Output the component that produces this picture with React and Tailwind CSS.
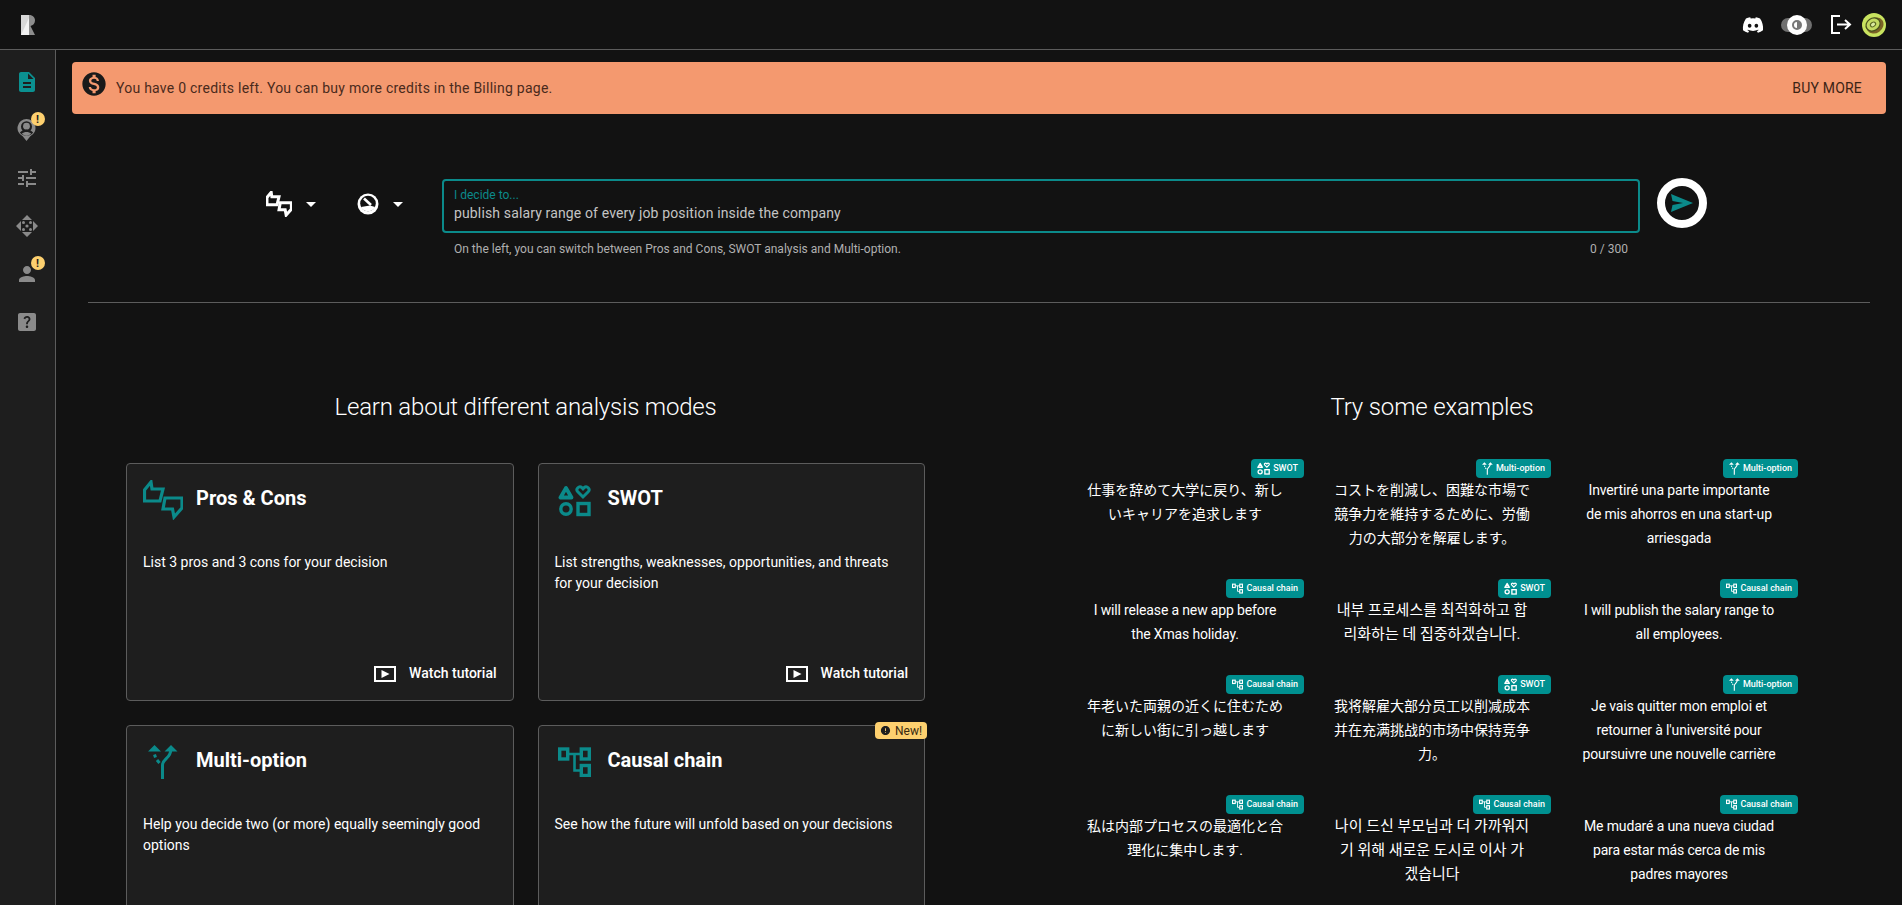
import { FaDiscord } from 'react-icons/fa'
import { MdDescription, MdTune, MdPerson, MdHelpCenter, MdMonetizationOn, MdArrowDropDown, MdError } from 'react-icons/md'

function ProsConsIcon({ className }) {
  return (
    <svg viewBox="0 0 40 40" fill="none" stroke="currentColor" strokeWidth="3.200" strokeLinejoin="miter" className={className}>
      <path d="M1.500 21V10L8 2l1 7h11l-3 12z" />
      <path d="M22 18h17v10l-8 9-1.500-8H20z" />
    </svg>
  )
}

function SwotIcon({ className }) {
  return (
    <svg viewBox="0 0 33 33" fill="none" stroke="currentColor" strokeWidth="3.400" className={className}>
      <path d="M8 4L2.500 13.500h11z" strokeLinejoin="round" strokeWidth="3.800" />
      <path d="M25 13l-5.200-5.200a2.900 2.900 0 0 1 4.100-4.100l1.100 1.100 1.100-1.100a2.900 2.900 0 0 1 4.100 4.100z" strokeWidth="3" />
      <circle cx="8" cy="25" r="5.200" />
      <rect x="20" y="19.500" width="11" height="11" />
    </svg>
  )
}

function MultiIcon({ className }) {
  return (
    <svg viewBox="0 0 30 34" fill="none" className={className}>
      <path d="M14.500 34V20C14.500 14 22.800 13 22.800 5" stroke="currentColor" strokeWidth="3" />
      <path d="M6.500 0L13 6.500H0zM23 0l6.500 6.500h-13z" fill="currentColor" />
      <path d="M6.500 9.500l1 3M9 15l2.500 3" stroke="currentColor" strokeWidth="3" />
    </svg>
  )
}

function CausalIcon({ className }) {
  return (
    <svg viewBox="0 0 33 30" fill="none" stroke="currentColor" strokeWidth="3.400" className={className}>
      <rect x="1.700" y="2" width="8" height="10" />
      <rect x="23.300" y="2" width="8" height="10" />
      <rect x="23.300" y="18.500" width="8" height="10" />
      <path d="M9.500 7h14M16.500 7v16.500h7" strokeWidth="2.600" />
    </svg>
  )
}

function MoveIcon({ className }) {
  return (
    <svg viewBox="0 0 22 22" fill="currentColor" className={className}>
      <path d="M11 0l5 5H6zM11 22l-5-5h10zM0 11l5-5v10zM22 11l-5 5V6z" />
      <circle cx="11" cy="11" r="1.600" />
      <circle cx="7.500" cy="7.500" r="1.500" />
      <circle cx="14.500" cy="7.500" r="1.500" />
      <circle cx="7.500" cy="14.500" r="1.500" />
      <circle cx="14.500" cy="14.500" r="1.500" />
    </svg>
  )
}

function UserPinIcon({ className }) {
  return (
    <svg viewBox="0 0 20 23" className={className}>
      <path d="M10 0a9.500 9.500 0 0 1 4 18.100L10 23l-4-4.900A9.500 9.500 0 0 1 10 0z" fill="currentColor" />
      <circle cx="10" cy="8" r="5.800" fill="#1e1e1e" />
      <circle cx="10" cy="7.500" r="3.600" fill="currentColor" />
      <path d="M3 14c2-2 4-2.800 7-2.800s5 .8 7 2.800a9 9 0 0 1-14 0z" fill="#1e1e1e" />
      <path d="M5 15.500c1.500-1.500 3-2 5-2s3.500.5 5 2a8 8 0 0 1-10 0z" fill="currentColor" />
    </svg>
  )
}

function Logo() {
  return (
    <svg viewBox="0 0 14 20" className="w-[14px] h-[20px]">
      <path d="M0 0h8v20H0z" fill="#d8d8d8" />
      <path d="M0 20L8 3v17z" fill="#f2f2f2" />
      <path d="M8 0c4 0 6 2.500 6 5.500S12 10.500 9.500 11L14 20H8z" fill="#8d8d8d" />
    </svg>
  )
}

function Kiwi() {
  return (
    <svg viewBox="0 0 24 24" className="w-6 h-6">
      <circle cx="12" cy="12" r="12" fill="#c8e35f" />
      <ellipse cx="12.500" cy="13" rx="9" ry="7.500" transform="rotate(-35 12 12)" fill="#7a6226" />
      <ellipse cx="11.500" cy="11" rx="8" ry="6.800" transform="rotate(-35 12 12)" fill="#46501c" />
      <ellipse cx="11.500" cy="11" rx="6.800" ry="5.600" transform="rotate(-35 12 12)" fill="#c4da62" />
      <ellipse cx="11.500" cy="11" rx="3.400" ry="2.600" transform="rotate(-35 12 12)" fill="#5c6a24" />
      <ellipse cx="11.500" cy="11" rx="2.200" ry="1.600" transform="rotate(-35 12 12)" fill="#dcebA0" />
    </svg>
  )
}

function WarnDot() {
  return (
    <span className="absolute -top-[6px] -right-[6px] w-[14px] h-[14px] rounded-full bg-[#fdd06f] flex items-center justify-center text-[#1e1e1e] text-[11px] font-bold leading-none">!</span>
  )
}

const sideItems = [
  { icon: <MdDescription className="w-[24px] h-[24px]" />, color: 'text-[#0b9090]', top: 'mt-[20px]' },
  { icon: <UserPinIcon className="w-[19px] h-[22px]" />, warn: true, top: 'mt-[24px]' },
  { icon: <MdTune className="w-[24px] h-[24px]" />, top: 'mt-[24px]' },
  { icon: <MoveIcon className="w-[22px] h-[22px]" />, top: 'mt-[24px]' },
  { icon: <MdPerson className="w-[24px] h-[24px]" />, warn: true, top: 'mt-[24px]' },
  { icon: <MdHelpCenter className="w-[24px] h-[24px]" />, top: 'mt-[24px]' },
]

const modes = [
  {
    title: 'Pros & Cons',
    desc: 'List 3 pros and 3 cons for your decision',
    icon: <ProsConsIcon className="w-[40px] h-[40px]" />,
    iconBox: 'w-[53px] pl-0',
  },
  {
    title: 'SWOT',
    desc: 'List strengths, weaknesses, opportunities, and threats for your decision',
    icon: <SwotIcon className="w-[33px] h-[33px]" />,
    iconBox: 'w-[53px] pl-[3px]',
  },
  {
    title: 'Multi-option',
    desc: 'Help you decide two (or more) equally seemingly good options',
    icon: <MultiIcon className="w-[30px] h-[34px]" />,
    iconBox: 'w-[53px] pl-[5px]',
  },
  {
    title: 'Causal chain',
    desc: 'See how the future will unfold based on your decisions',
    icon: <CausalIcon className="w-[33px] h-[30px]" />,
    iconBox: 'w-[53px] pl-[3px]',
    isNew: true,
  },
]

const chipIcons = {
  SWOT: <SwotIcon className="w-[13px] h-[13px]" />,
  'Multi-option': <MultiIcon className="w-[11px] h-[13px]" />,
  'Causal chain': <CausalIcon className="w-[11px] h-[13px]" />,
}

const LATIN = 'text-[14px] tracking-[-0.15px]'
const JA = "font-['Roboto','Noto_Sans_CJK_JP',sans-serif] text-[14px]"
const KO = "font-['Roboto','Noto_Sans_CJK_KR',sans-serif] text-[15px]"
const ZH = "font-['Roboto','Noto_Sans_CJK_SC',sans-serif] text-[14px]"

const examples = [
  { chip: 'SWOT', font: JA, text: '仕事を辞めて大学に戻り、新しいキャリアを追求します' },
  { chip: 'Multi-option', font: JA, text: 'コストを削減し、困難な市場で競争力を維持するために、労働力の大部分を解雇します。' },
  { chip: 'Multi-option', font: LATIN, text: 'Invertiré una parte importante de mis ahorros en una start-up arriesgada' },
  { chip: 'Causal chain', font: LATIN, text: 'I will release a new app before the Xmas holiday.' },
  { chip: 'SWOT', font: KO, text: '내부 프로세스를 최적화하고 합리화하는 데 집중하겠습니다.' },
  { chip: 'Causal chain', font: LATIN, text: 'I will publish the salary range to all employees.' },
  { chip: 'Causal chain', font: JA, text: '年老いた両親の近くに住むために新しい街に引っ越します' },
  { chip: 'SWOT', font: ZH, text: '我将解雇大部分员工以削减成本并在充满挑战的市场中保持竞争力。' },
  { chip: 'Multi-option', font: LATIN, text: "Je vais quitter mon emploi et retourner à l'université pour poursuivre une nouvelle carrière" },
  { chip: 'Causal chain', font: JA, text: '私は内部プロセスの最適化と合理化に集中します.' },
  { chip: 'Causal chain', font: KO, text: '나이 드신 부모님과 더 가까워지기 위해 새로운 도시로 이사 가겠습니다' },
  { chip: 'Causal chain', font: LATIN, text: 'Me mudaré a una nueva ciudad para estar más cerca de mis padres mayores' },
]

function ModeCard({ mode }) {
  return (
    <div className="relative h-[238px] bg-[#1e1e1e] border border-[#5c5c5c] rounded p-4 flex flex-col">
      {mode.isNew && (
        <span className="absolute -top-[4px] -right-[3px] h-[17px] px-[5px] rounded bg-[#fdd06f] text-[#3a2a10] text-[12px] flex items-center gap-[4px]">
          <MdError className="w-[11px] h-[11px] text-[#1e1e1e]" />
          New!
        </span>
      )}
      <div className="flex items-center h-[40px]">
        <div className={`${mode.iconBox} text-[#0b8a8a] shrink-0`}>{mode.icon}</div>
        <h3 className="text-[20px] font-bold text-white -mt-[5px]">{mode.title}</h3>
      </div>
      <p className="mt-[32px] text-[14px] leading-[21px] text-white">{mode.desc}</p>
      <div className="mt-auto flex items-center justify-end gap-[13px]">
        <svg viewBox="0 0 22 16" className="w-[22px] h-[16px] text-white" fill="none">
          <rect x="1" y="1" width="20" height="14" stroke="currentColor" strokeWidth="2" />
          <path d="M7.500 4l8 4-8 4z" fill="currentColor" />
        </svg>
        <span className="text-[14px] leading-[21px] font-medium text-white">Watch tutorial</span>
      </div>
    </div>
  )
}

function Example({ item }) {
  return (
    <div className="flex flex-col">
      <div className="flex justify-end">
        <span className="h-[19px] px-[6px] rounded bg-[#009090] text-white text-[9px] font-medium flex items-center gap-[3px]">
          {chipIcons[item.chip]}
          {item.chip}
        </span>
      </div>
      <p className={`px-[20.5px] text-center leading-[24px] text-white ${item.font}`}>{item.text}</p>
    </div>
  )
}

export default function App() {
  return (
    <div className="h-screen overflow-hidden bg-[#121212] flex flex-col font-['Roboto',sans-serif]">
      <header className="h-[50px] shrink-0 border-b border-[#5c5c5c] flex items-center justify-between pl-[21px] pr-[16px]">
        <Logo />
        <div className="flex items-center">
          <FaDiscord className="w-[22px] h-[22px] text-white" />
          <div className="relative ml-[17px] w-[31px] h-[14px] rounded-full bg-[#707070] flex items-center justify-center">
            <span className="w-[20px] h-[20px] rounded-full bg-white flex items-center justify-center">
              <span className="w-[10px] h-[10px] rounded-full border-2 border-[#777777] bg-[linear-gradient(90deg,#ffffff_50%,#777777_50%)]" />
            </span>
          </div>
          <svg viewBox="0 0 21 19" fill="none" stroke="white" strokeWidth="2" className="ml-[19px] w-[21px] h-[19px]">
            <path d="M9 1H1v17h8M6 9.500h13M14 5l5 4.500L14 14" />
          </svg>
          <div className="ml-[10px]">
            <Kiwi />
          </div>
        </div>
      </header>

      <div className="flex flex-1 min-h-0">
        <aside className="w-[56px] shrink-0 bg-[#1e1e1e] border-r border-[#5c5c5c] flex flex-col items-center pr-[2px]">
          {sideItems.map((item, i) => (
            <div key={i} className={`relative ${item.top} w-[24px] h-[24px] flex items-center justify-center ${item.color || 'text-[#8a8a8a]'}`}>
              {item.icon}
              {item.warn && <WarnDot />}
            </div>
          ))}
        </aside>

        <main className="flex-1 min-w-0">
          <div className="mx-4 mt-3 h-[52px] rounded bg-[#f4996f] flex items-center pl-[8px] pr-[24px]">
            <MdMonetizationOn className="w-[28px] h-[28px] text-[#1a1a1a] -mt-[8px]" />
            <span className="ml-[8px] text-[14px] tracking-[0.25px] text-[#4a2a1c]">You have 0 credits left. You can buy more credits in the Billing page.</span>
            <span className="ml-auto text-[14px] tracking-[0.2px] text-[#3c2415]">BUY MORE</span>
          </div>

          <div className="mt-[65px] flex pl-[210px]">
            <div className="h-[50px] flex items-center text-white">
              <ProsConsIcon className="w-[26px] h-[26px] [stroke-width:4.6]" />
              <MdArrowDropDown className="w-[24px] h-[24px] ml-[7px]" />
              <svg viewBox="0 0 22 22" className="ml-[34px] w-[22px] h-[22px]">
                <circle cx="11" cy="11" r="10.500" fill="white" />
                <circle cx="11" cy="10.500" r="7.800" fill="#121212" />
                <path d="M4 14a7.800 7.800 0 0 0 14 0l-5-1.500z" fill="white" />
                <path d="M7 5.500l7 6.500" stroke="white" strokeWidth="2.600" />
              </svg>
              <MdArrowDropDown className="w-[24px] h-[24px] ml-[7px]" />
            </div>
            <div className="ml-[32px] w-[1198px]">
              <div className="h-[54px] border-2 border-[#0b8a8a] rounded pl-[10px] pt-[6px]">
                <div className="text-[12px] leading-[16px] text-[#0b8a8a]">I decide to...</div>
                <div className="text-[14px] leading-[20px] tracking-[0.14px] text-[#c4c4c4]">publish salary range of every job position inside the company</div>
              </div>
              <div className="mt-[8px] px-3 flex justify-between text-[12px] leading-[16px] text-[#b0b0b0]">
                <span>On the left, you can switch between Pros and Cons, SWOT analysis and Multi-option.</span>
                <span>0 / 300</span>
              </div>
            </div>
            <div className="ml-[17px] -mt-px w-[50px] h-[50px] rounded-full border-[8px] border-white flex items-center justify-center">
              <svg viewBox="0 0 22 18" className="w-[22px] h-[18px] text-[#0b8a8a]" fill="currentColor">
                <path d="M0 0l22 9L0 18l1.500-7L12 9 1.500 7z" />
              </svg>
            </div>
          </div>

          <div className="mt-[45px] mx-8 h-px bg-[#5c5c5c]" />

          <div className="flex pl-[70px] mt-[88px]">
            <section className="w-[799px] shrink-0">
              <h2 className="text-[24px] leading-[32px] font-light tracking-[-0.2px] text-white text-center">Learn about different analysis modes</h2>
              <div className="mt-[40px] grid grid-cols-2 gap-6">
                {modes.map((m) => <ModeCard key={m.title} mode={m} />)}
              </div>
            </section>
            <section className="ml-[141px] w-[732px] shrink-0">
              <h2 className="text-[24px] leading-[32px] font-light tracking-[-0.15px] text-white text-center">Try some examples</h2>
              <div className="mt-[36px] grid grid-cols-3 gap-x-[9px] gap-y-[29px]">
                {examples.map((e, i) => <Example key={i} item={e} />)}
              </div>
            </section>
          </div>
        </main>
      </div>
    </div>
  )
}
